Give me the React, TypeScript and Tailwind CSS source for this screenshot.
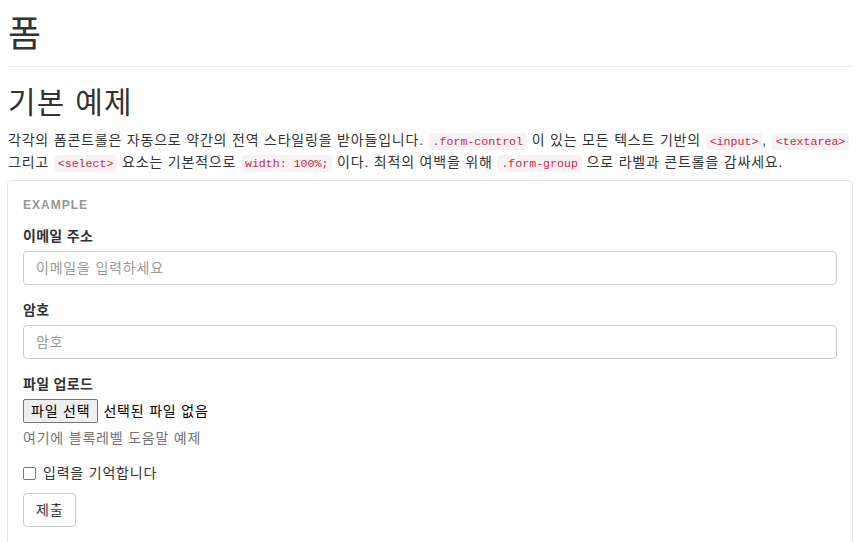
import React from "react";

function Code({ children }: { children: React.ReactNode }) {
  return (
    <code className="rounded-[4px] bg-[#f9f2f4] px-1 py-[2px] font-['Liberation_Mono',monospace] text-[11.6px] tracking-normal text-[#c7254e]">
      {children}
    </code>
  );
}

function Field({ label, placeholder }: { label: string; placeholder: string }) {
  return (
    <div className="mb-[15px]">
      <label className="mb-[5px] block text-[14px] font-bold leading-5 tracking-[0.3px]">{label}</label>
      <input
        type="text"
        placeholder={placeholder}
        className="block h-[34px] w-full rounded-[4px] border border-[#ccc] px-3 text-[14px] text-[#555] placeholder:text-[#999] focus:outline-none"
      />
    </div>
  );
}

export default function App() {
  return (
    <div className="min-h-screen bg-white px-2 font-['Liberation_Sans','Noto_Sans_CJK_KR',sans-serif] text-[14px] leading-5 tracking-[0.8px] text-[#333]">
      <div className="border-b border-[#eee] pt-[15px] pb-[11px]">
        <h1 className="text-[36px] leading-[40px] font-normal">폼</h1>
      </div>

      <h2 className="mt-[19px] mb-[10px] text-[30px] leading-[33px] font-normal tracking-[1.2px]">기본 예제</h2>
      <p className="mb-[11px] h-10 pt-px">
        각각의 폼콘트롤은 자동으로 약간의 전역 스타일링을 받아들입니다. <Code>.form-control</Code> 이 있는 모든 텍스트
        기반의 <Code>&lt;input&gt;</Code>, <Code>&lt;textarea&gt;</Code>
        <br />
        그리고 <Code>&lt;select&gt;</Code> 요소는 기본적으로 <Code>width: 100%;</Code> 이다. 최적의 여백을 위해{" "}
        <Code>.form-group</Code> 으로 라벨과 콘트롤을 감싸세요.
      </p>

      <div className="-mx-px rounded-t-[4px] border border-[#e5e5e5] px-[15px] pt-[16px] pb-6">
        <div className="mb-3 text-[12px] leading-[17px] font-bold tracking-[1px] text-[#959595]">EXAMPLE</div>

        <Field label="이메일 주소" placeholder="이메일을 입력하세요" />
        <Field label="암호" placeholder="암호" />

        <div className="mb-[15px]">
          <label className="mb-[5px] block text-[14px] font-bold leading-5 tracking-[0.3px]">파일 업로드</label>
          <div className="flex h-[24px] items-center text-[14px]">
            <span className="flex h-[24px] items-center rounded-[2px] border border-[#767676] bg-[#efefef] px-[7px] text-[#000]">
              파일 선택
            </span>
            <span className="ml-[5px] text-[#000]">선택된 파일 없음</span>
          </div>
          <p className="mt-[5px] mb-[10px] text-[#737373]">여기에 블록레벨 도움말 예제</p>
        </div>

        <div className="mb-[10px] flex h-5 items-center gap-[7px]">
          <span className="h-[13px] w-[13px] rounded-[2px] border border-[#767676] bg-white" />
          <span>입력을 기억합니다</span>
        </div>

        <button className="h-[34px] rounded-[4px] border border-[#ccc] bg-white px-3 text-[14px] text-[#333]">
          제출
        </button>
      </div>
    </div>
  );
}
